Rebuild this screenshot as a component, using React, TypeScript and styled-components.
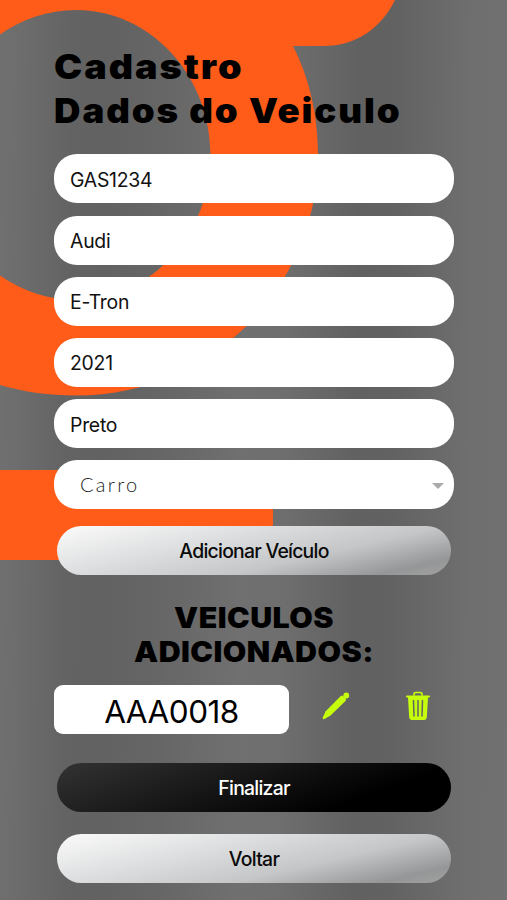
import React, { FunctionComponent } from 'react';
import styled, { createGlobalStyle } from 'styled-components';

const GlobalStyle = createGlobalStyle`
  * {
    box-sizing: border-box;
  }

  body {
    margin: 0;
    font-family: Inter, 'Liberation Sans', sans-serif;
  }
`;

const Screen = styled.div`
  position: relative;
  width: 507px;
  height: 900px;
  overflow: hidden;
  background: linear-gradient(
    90.5deg,
    #707070 0%,
    #6d6d6d 4%,
    #636363 14%,
    #626262 21%,
    #666666 32%,
    #707070 48%,
    #6e6e6e 56%,
    #616161 70%,
    #626262 77%,
    #6f6f6f 92%,
    #717171 100%
  );
`;

const Artwork = styled.svg`
  position: absolute;
  top: 0;
  left: 0;
`;

const Content = styled.main`
  position: relative;
  display: flex;
  flex-direction: column;
  padding: 45px 53px 0 54px;
`;

const Title = styled.h1`
  margin: 0 0 22px;
  font-size: 34px;
  font-weight: 900;
  line-height: 43.7px;
  white-space: nowrap;
  color: #000;
`;

const TitleLine = styled.span<{ $stretch: number }>`
  display: block;
  letter-spacing: 1.8px;
  transform: scaleX(${(props) => props.$stretch});
  transform-origin: left;
`;

const Fields = styled.div`
  display: flex;
  flex-direction: column;
  gap: 12.2px;
`;

const Field = styled.div`
  display: flex;
  align-items: center;
  height: 49px;
  padding: 2px 16px 0;
  border-radius: 23px;
  background: #fff;
  color: #111;
  font-size: 19.4px;
  letter-spacing: -0.25px;
`;

const SelectField = styled(Field)`
  justify-content: space-between;
  padding: 0 10px 1px 26px;
  color: #222;
  font-family: Lato, sans-serif;
  font-size: 20px;
  font-weight: 300;
  letter-spacing: 2.3px;
`;

const Arrow = styled.span`
  margin-top: 4px;
  border: 6px solid transparent;
  border-top-color: #aaa;
  border-bottom-width: 0;
`;

const Button = styled.button<{ $dark?: boolean }>`
  width: 394px;
  height: 49px;
  margin: 0 3px;
  padding: 1px 0 0;
  border: 0;
  border-radius: 24.5px;
  background: ${(props) =>
    props.$dark
      ? 'linear-gradient(160deg, #333 0%, #202020 28%, #101010 52%, #000 76%)'
      : 'linear-gradient(167deg, #fbfbfb 0%, #e0e1e2 32%, #c4c6c8 64%, #959697 88%, #a2a2a2 100%)'};
  color: ${(props) => (props.$dark ? '#fff' : '#0a0a0a')};
  font-family: inherit;
  font-size: 19.4px;
  font-weight: 500;
  letter-spacing: -0.75px;
`;

const AddButton = styled(Button)`
  margin-top: 17px;
`;

const Subtitle = styled.h2`
  margin: 26px 0 16px;
  font-size: 28px;
  font-weight: 900;
  line-height: 34px;
  letter-spacing: 0.4px;
  text-align: center;
  color: #000;
  transform: scaleX(1.085);
`;

const VehicleRow = styled.div`
  display: flex;
  align-items: flex-start;
`;

const Plate = styled.div`
  display: flex;
  align-items: center;
  justify-content: center;
  width: 235px;
  height: 49px;
  padding-top: 4px;
  border-radius: 9px;
  background: #fff;
  color: #000;
  font-size: 31.5px;
  letter-spacing: -0.5px;
`;

const EditIcon = styled.svg`
  margin: 7px 0 0 33px;
`;

const TrashIcon = styled.svg`
  margin: 6px 0 0 56px;
`;

const Actions = styled.div`
  display: flex;
  flex-direction: column;
  gap: 22px;
  margin-top: 29px;
`;

const vehicle = ['GAS1234', 'Audi', 'E-Tron', '2021', 'Preto'];

const App: FunctionComponent = () => {
  return (
    <>
      <GlobalStyle />
      <Screen>
        <Artwork width="507" height="900" viewBox="0 0 507 900" fill="#ff5b19" aria-hidden="true">
          <path
            fillRule="evenodd"
            d="M0 0H395C381 28 357 46 323 46H293C309 77 318 115 318 155C318 288 210 395.500 76 395.500C49 395.500 24 392 0 385V275.500C22 291 48 300 76 300C150 300 210.500 235 210.500 155C210.500 75 150 10 76 10C48 10 22 19 0 34.500Z"
          />
          <path d="M0 470H273V560H0Z" />
        </Artwork>
        <Content>
          <Title>
            <TitleLine $stretch={1.11}>Cadastro</TitleLine>
            <TitleLine $stretch={1.077}>Dados do Veiculo</TitleLine>
          </Title>
          <Fields>
            {vehicle.map((value) => (
              <Field key={value}>{value}</Field>
            ))}
            <SelectField>
              Carro
              <Arrow />
            </SelectField>
          </Fields>
          <AddButton>Adicionar Veículo</AddButton>
          <Subtitle>
            VEICULOS
            <br />
            ADICIONADOS:
          </Subtitle>
          <VehicleRow>
            <Plate>AAA0018</Plate>
            <EditIcon width="28" height="28" viewBox="0 0 28 28" fill="#c6ff0b">
              <path d="M18.800 4Q19.900 3 21.200 4.200L23.600 6.600Q24.500 7.800 23.500 8.900L8.500 23.600L2.400 27Q0.300 27.600 0.700 25.500L3.700 19.200Z" />
              <circle cx="24.300" cy="3.500" r="2.900" />
            </EditIcon>
            <TrashIcon width="24" height="30" viewBox="0 0 24 30" fill="none">
              <path d="M8 4.500V3Q8 1.500 9.500 1.500H14.500Q16 1.500 16 3V4.500" stroke="#c6ff0b" strokeWidth="1.700" />
              <path
                d="M1 4.500H23Q24 4.500 24 5.500T23 6.500H22L20.800 26.500Q20.500 29 18 29H6Q3.500 29 3.200 26.500L2 6.500H1Q0 6.500 0 5.500T1 4.500Z"
                fill="#c6ff0b"
              />
              <path
                d="M7.500 9.500L8 25M12 9.500V25M16.500 9.500L16 25"
                stroke="#646464"
                strokeWidth="1.500"
                strokeLinecap="round"
              />
            </TrashIcon>
          </VehicleRow>
          <Actions>
            <Button $dark>Finalizar</Button>
            <Button>Voltar</Button>
          </Actions>
        </Content>
      </Screen>
    </>
  );
};

export default App;
